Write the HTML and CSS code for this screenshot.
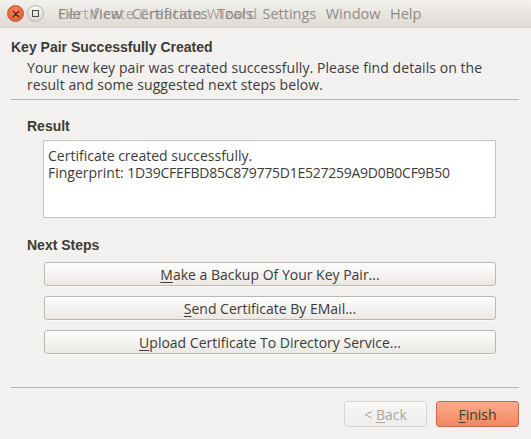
FILE: index.html
```html
<!DOCTYPE html>
<html>
<head>
<meta charset="utf-8">
<link rel="stylesheet" href="styles.css">
</head>
<body>
<div class="window">
  <div class="titlebar">
    <div class="wbtn close"><svg width="8" height="8" viewBox="0 0 8 8"><path d="M1.2 1.2L6.8 6.8M6.8 1.2L1.2 6.8" stroke="#5a2a1a" stroke-width="1.5" stroke-linecap="round"/></svg></div>
    <div class="wbtn max"><svg width="9" height="9" viewBox="0 0 9 9"><rect x="1.5" y="1.5" width="6" height="6" fill="none" stroke="#4a4a4a" stroke-width="1"/></svg></div>
    <div class="titletext">
      <span class="menu"><span>File</span><span>View</span><span>Certificates</span><span>Tools</span><span>Settings</span><span>Window</span><span>Help</span></span>
      <span class="wintitle">Certificate Creation Wizard</span>
    </div>
  </div>
  <div class="content">
    <div class="heading">Key Pair Successfully Created</div>
    <div class="desc">Your new key pair was created successfully. Please find details on the<br>result and some suggested next steps below.</div>
    <div class="sep"></div>
    <div class="group">
      <div class="glabel">Result</div>
      <div class="textbox">Certificate created successfully.<br>Fingerprint: <span class="fp">1D39CFEFBD85C879775D1E527259A9D0B0CF9B50</span></div>
      <div class="glabel next">Next Steps</div>
      <div class="steps">
        <div class="btn"><span><u>M</u>ake a Backup Of Your Key Pair...</span></div>
        <div class="btn"><span><u>S</u>end Certificate By EMail...</span></div>
        <div class="btn"><span><u>U</u>pload Certificate To Directory Service...</span></div>
      </div>
    </div>
    <div class="sep bottom"></div>
    <div class="footer">
      <div class="fbtn back"><span>&lt; <u>B</u>ack</span></div>
      <div class="fbtn finish"><span><u>F</u>inish</span></div>
    </div>
  </div>
</div>
</body>
</html>
```

FILE: styles.css
```css
html, body {
  margin: 0;
  padding: 0;
}
body {
  width: 531px;
  height: 439px;
  overflow: hidden;
  background: #f2f1f0;
  font-family: "Open Sans", "DejaVu Sans", sans-serif;
  font-size: 14px;
  color: #3c3b37;
}
.window {
  width: 531px;
  height: 439px;
}
.titlebar {
  height: 28px;
  display: flex;
  align-items: center;
  padding-left: 7px;
  gap: 3px;
  background: linear-gradient(#f3f1ee, #dedad4);
  border-top-right-radius: 6px;
  box-sizing: border-box;
  border-bottom: 1px solid #d6d2cc;
}
.wbtn {
  width: 17px;
  height: 17px;
  border-radius: 50%;
  display: flex;
  align-items: center;
  justify-content: center;
  box-sizing: border-box;
}
.close {
  background: radial-gradient(circle at 50% 35%, #f6855a, #e0552b);
  border: 1px solid #c45432;
}
.max {
  background: linear-gradient(#f7f6f4, #dcd8d2);
  border: 1px solid #b8b3ac;
}
.titletext {
  position: relative;
  margin-left: 11px;
  height: 20px;
  flex: 1;
}
.menu, .wintitle {
  position: absolute;
  left: 0;
  top: 0;
  white-space: nowrap;
  color: #8f8a85;
  font-size: 14.5px;
  line-height: 20px;
}
.menu span {
  margin-right: 9.5px;
}
.wintitle {
  color: rgba(140, 135, 130, 0.7);
  letter-spacing: 0.7px;
}
.content {
  padding: 11px 12px 0 11px;
}
.heading {
  font-weight: bold;
  line-height: 17px;
  font-family: "Liberation Sans", "Open Sans", sans-serif;
  font-size: 14px;
}
.desc {
  padding-left: 16px;
  line-height: 17px;
  margin-top: 3px;
  letter-spacing: 0.07px;
}
.sep {
  height: 1px;
  background: #b8b5b1;
  margin-top: 6px;
}
.group {
  padding-left: 16px;
  padding-right: 23px;
}
.glabel {
  font-weight: bold;
  margin-top: 18px;
  line-height: 17px;
  font-family: "Liberation Sans", "Open Sans", sans-serif;
  font-size: 14px;
}
.textbox {
  margin-top: 5px;
  margin-left: 16px;
  height: 78px;
  box-sizing: border-box;
  background: #ffffff;
  border: 1px solid #c9c3bd;
  padding: 6px 4px;
  line-height: 17px;
}
.fp {
  letter-spacing: -0.25px;
}
.glabel.next {
  margin-top: 19px;
}
.steps {
  margin-top: 8px;
  margin-left: 17px;
  display: flex;
  flex-direction: column;
  gap: 10px;
}
.btn {
  height: 24px;
  box-sizing: border-box;
  border: 1px solid #bdb7b0;
  border-radius: 3px;
  background: linear-gradient(#fefefe, #ebe8e4);
  display: flex;
  align-items: center;
  justify-content: center;
  box-shadow: 0 1px 0 rgba(255,255,255,0.6);
}
.sep.bottom {
  margin-top: 33px;
}
.footer {
  display: flex;
  justify-content: flex-end;
  gap: 9px;
  margin-top: 13px;
}
.fbtn {
  width: 83px;
  height: 26px;
  box-sizing: border-box;
  border-radius: 3px;
  display: flex;
  align-items: center;
  justify-content: center;
}
.back {
  border: 1px solid #d8d3ce;
  background: linear-gradient(#f8f7f6, #efedeb);
  color: #a9a6a2;
}
.finish {
  border: 1px solid #c26a4c;
  background: linear-gradient(#fbab8a, #f2875f);
  color: #3c3b37;
}
u {
  text-decoration-thickness: 1px;
  text-underline-offset: 2px;
}
```
